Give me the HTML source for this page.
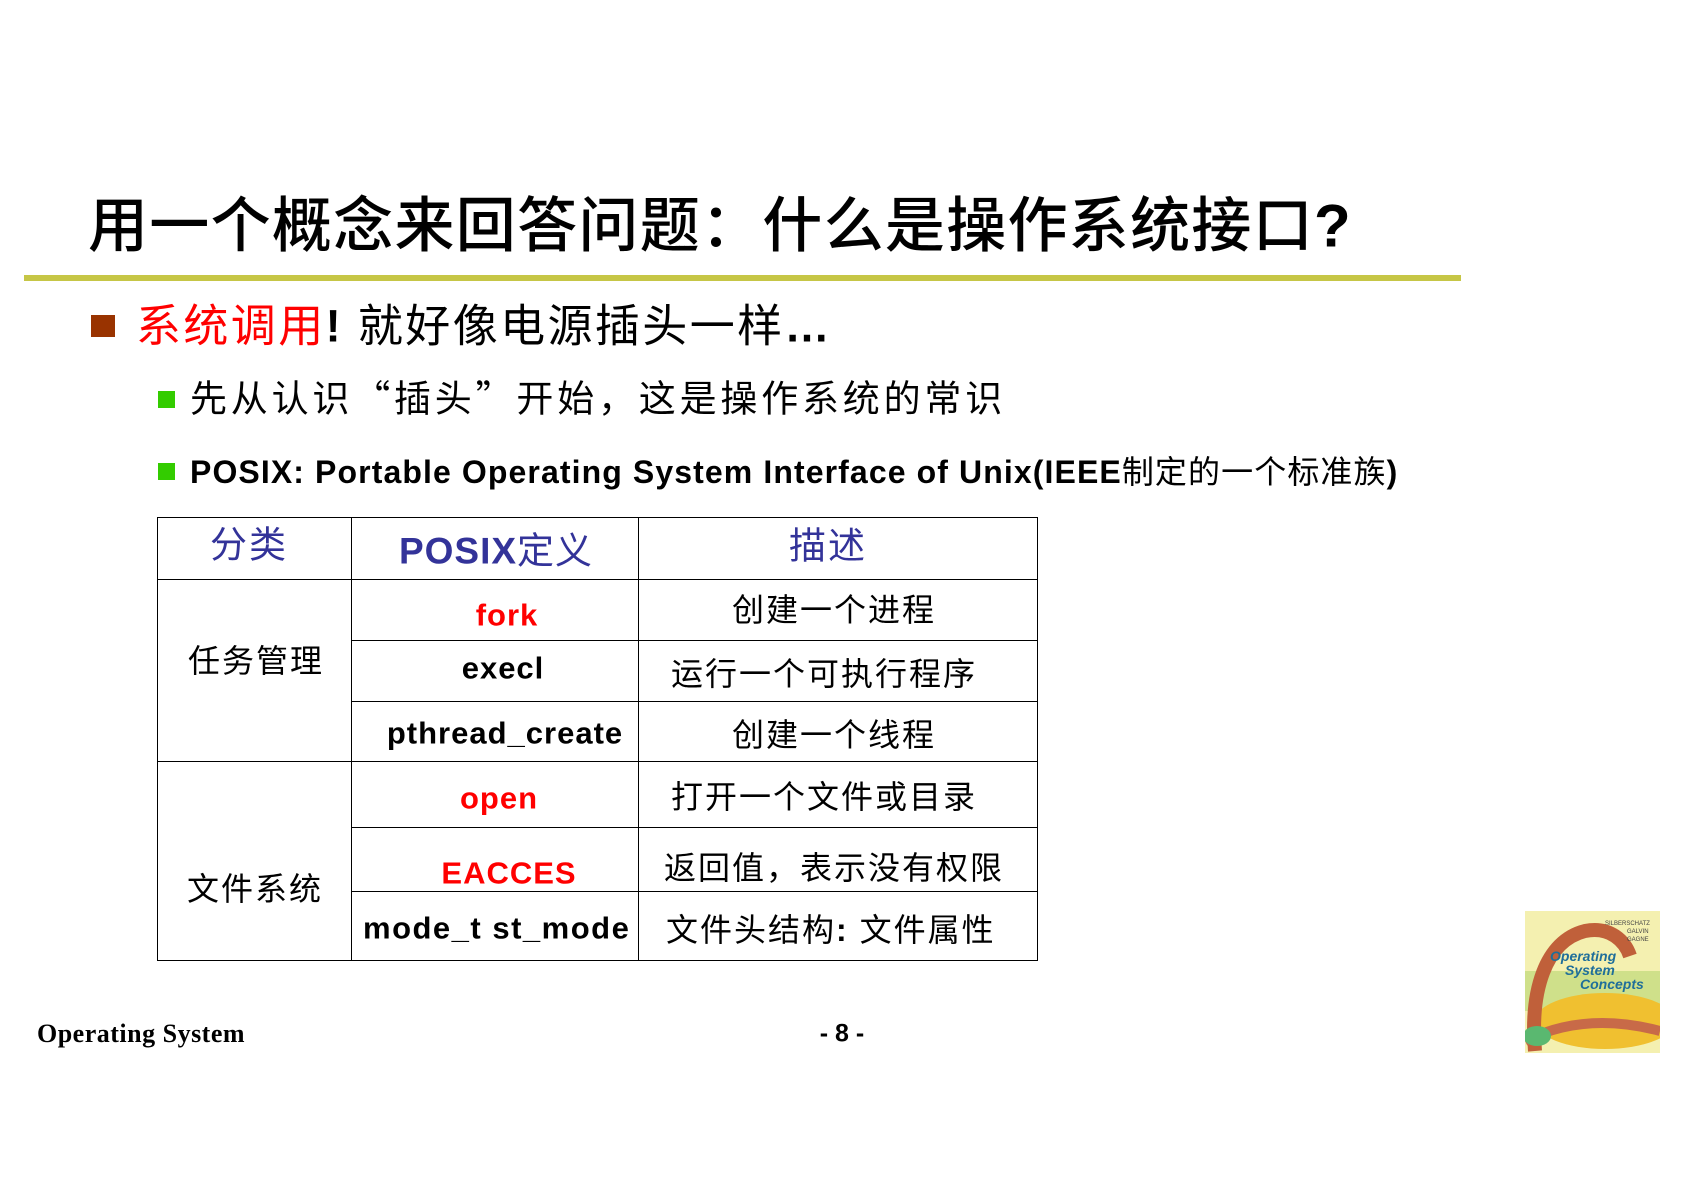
<!DOCTYPE html>
<html><head><meta charset="utf-8"><style>
body{margin:0;width:1684px;height:1190px;background:#fff;position:relative;overflow:hidden;font-family:"Liberation Sans","Noto Sans CJK SC",sans-serif;}
.a{position:absolute;white-space:nowrap;line-height:1;}
.c{transform:translate(-50%,-50%);}
.l{transform:translateY(-50%);}
.b{font-weight:bold;}
.red{color:#f00;}
.blue{color:#333399;}
.h{position:absolute;height:1px;background:#000;}
.v{position:absolute;width:1px;background:#000;}
.t{letter-spacing:2px;}
.tb{letter-spacing:1px;}
</style></head><body>
<div class="a l" style="left:88px;top:224px;font-size:60px;letter-spacing:1.3px;font-family:'Noto Sans CJK SC','Liberation Sans',sans-serif;font-weight:500;">用一个概念来回答问题：什么是操作系统接口<span style="font-family:'Liberation Sans',sans-serif;font-weight:bold">?</span></div>
<div style="position:absolute;left:24px;top:275px;width:1437px;height:6px;background:#c6c646;"></div>

<div style="position:absolute;left:91px;top:315px;width:24px;height:22px;background:#993300;"></div>
<div class="a l" style="left:136px;top:326px;font-size:45px;letter-spacing:2.4px;"><span class="red">系统调用</span><b>!</b> 就好像电源插头一样<b>…</b></div>

<div style="position:absolute;left:158px;top:391px;width:17px;height:17px;background:#33cc00;"></div>
<div class="a l" style="left:190px;top:396px;font-size:37px;letter-spacing:3.8px;font-family:'Noto Sans CJK SC',sans-serif;">先从认识“插头”开始，这是操作系统的常识</div>

<div style="position:absolute;left:158px;top:463px;width:17px;height:17px;background:#33cc00;"></div>
<div class="a l b" style="left:190px;top:472px;font-size:32px;letter-spacing:1.1px;">POSIX: Portable Operating System Interface of Unix(IEEE<span style="font-weight:normal">制定的一个标准族</span>)</div>

<div class="h" style="left:157px;top:517px;width:881px;"></div>
<div class="h" style="left:157px;top:579px;width:881px;"></div>
<div class="h" style="left:351px;top:640px;width:687px;"></div>
<div class="h" style="left:351px;top:701px;width:687px;"></div>
<div class="h" style="left:157px;top:761px;width:881px;"></div>
<div class="h" style="left:351px;top:827px;width:687px;"></div>
<div class="h" style="left:351px;top:891px;width:687px;"></div>
<div class="h" style="left:157px;top:960px;width:881px;"></div>
<div class="v" style="left:157px;top:517px;height:444px;"></div>
<div class="v" style="left:351px;top:517px;height:444px;"></div>
<div class="v" style="left:638px;top:517px;height:444px;"></div>
<div class="v" style="left:1037px;top:517px;height:444px;"></div>

<div class="a c blue t" style="left:249px;top:545px;font-size:37px;">分类</div>
<div class="a c blue tb" style="left:496px;top:551px;font-size:37px;"><b>POSIX</b>定义</div>
<div class="a c blue t" style="left:828px;top:546px;font-size:37px;">描述</div>

<div class="a c t" style="left:256px;top:661px;font-size:32px;">任务管理</div>
<div class="a c t" style="left:255px;top:889px;font-size:32px;">文件系统</div>

<div class="a c b red tb" style="left:507px;top:615px;font-size:31px;">fork</div>
<div class="a c b tb" style="left:503px;top:668px;font-size:31px;">execl</div>
<div class="a c b tb" style="left:505px;top:733px;font-size:31px;">pthread_create</div>
<div class="a c b red tb" style="left:499px;top:798px;font-size:31px;">open</div>
<div class="a c b red tb" style="left:509px;top:873px;font-size:31px;">EACCES</div>
<div class="a l b" style="left:363px;top:928px;font-size:31px;letter-spacing:1.5px;">mode_t st_mode</div>

<div class="a c t" style="left:834px;top:610px;font-size:32px;">创建一个进程</div>
<div class="a l t" style="left:671px;top:674px;font-size:32px;">运行一个可执行程序</div>
<div class="a c t" style="left:834px;top:735px;font-size:32px;">创建一个线程</div>
<div class="a l t" style="left:671px;top:797px;font-size:32px;">打开一个文件或目录</div>
<div class="a l t" style="left:664px;top:868px;font-size:32px;">返回值，表示没有权限</div>
<div class="a l t" style="left:666px;top:930px;font-size:32px;">文件头结构<b>:</b> 文件属性</div>

<div class="a l" style="left:37px;top:1034px;font-size:26px;letter-spacing:0.5px;font-family:'Liberation Serif',serif;font-weight:bold;">Operating System</div>
<div class="a c b" style="left:842px;top:1034px;font-size:25px;">- 8 -</div>

<svg style="position:absolute;left:1525px;top:911px" width="135" height="142" viewBox="0 0 135 142">
<rect width="135" height="142" fill="#f4f0b0"/>
<rect y="60" width="135" height="40" fill="#cfe08a"/>
<ellipse cx="80" cy="110" rx="70" ry="28" fill="#f0c030"/>
<path d="M10 140 C5 80 20 30 60 20 C85 15 100 30 105 45" stroke="#c0603a" stroke-width="14" fill="none"/>
<path d="M0 130 Q60 100 135 120" stroke="#c86a48" stroke-width="10" fill="none"/>
<ellipse cx="12" cy="125" rx="14" ry="10" fill="#5ab870"/>
<text x="25" y="50" font-size="14" font-style="italic" font-weight="bold" fill="#1f6e9a" font-family="Liberation Sans">Operating</text>
<text x="40" y="64" font-size="14" font-style="italic" font-weight="bold" fill="#1f6e9a" font-family="Liberation Sans">System</text>
<text x="55" y="78" font-size="14" font-style="italic" font-weight="bold" fill="#1f6e9a" font-family="Liberation Sans">Concepts</text>
<text x="80" y="14" font-size="6" fill="#444" font-family="Liberation Sans">SILBERSCHATZ</text>
<text x="102" y="22" font-size="6" fill="#444" font-family="Liberation Sans">GALVIN</text>
<text x="102" y="30" font-size="6" fill="#444" font-family="Liberation Sans">GAGNE</text>
</svg>
</body></html>
